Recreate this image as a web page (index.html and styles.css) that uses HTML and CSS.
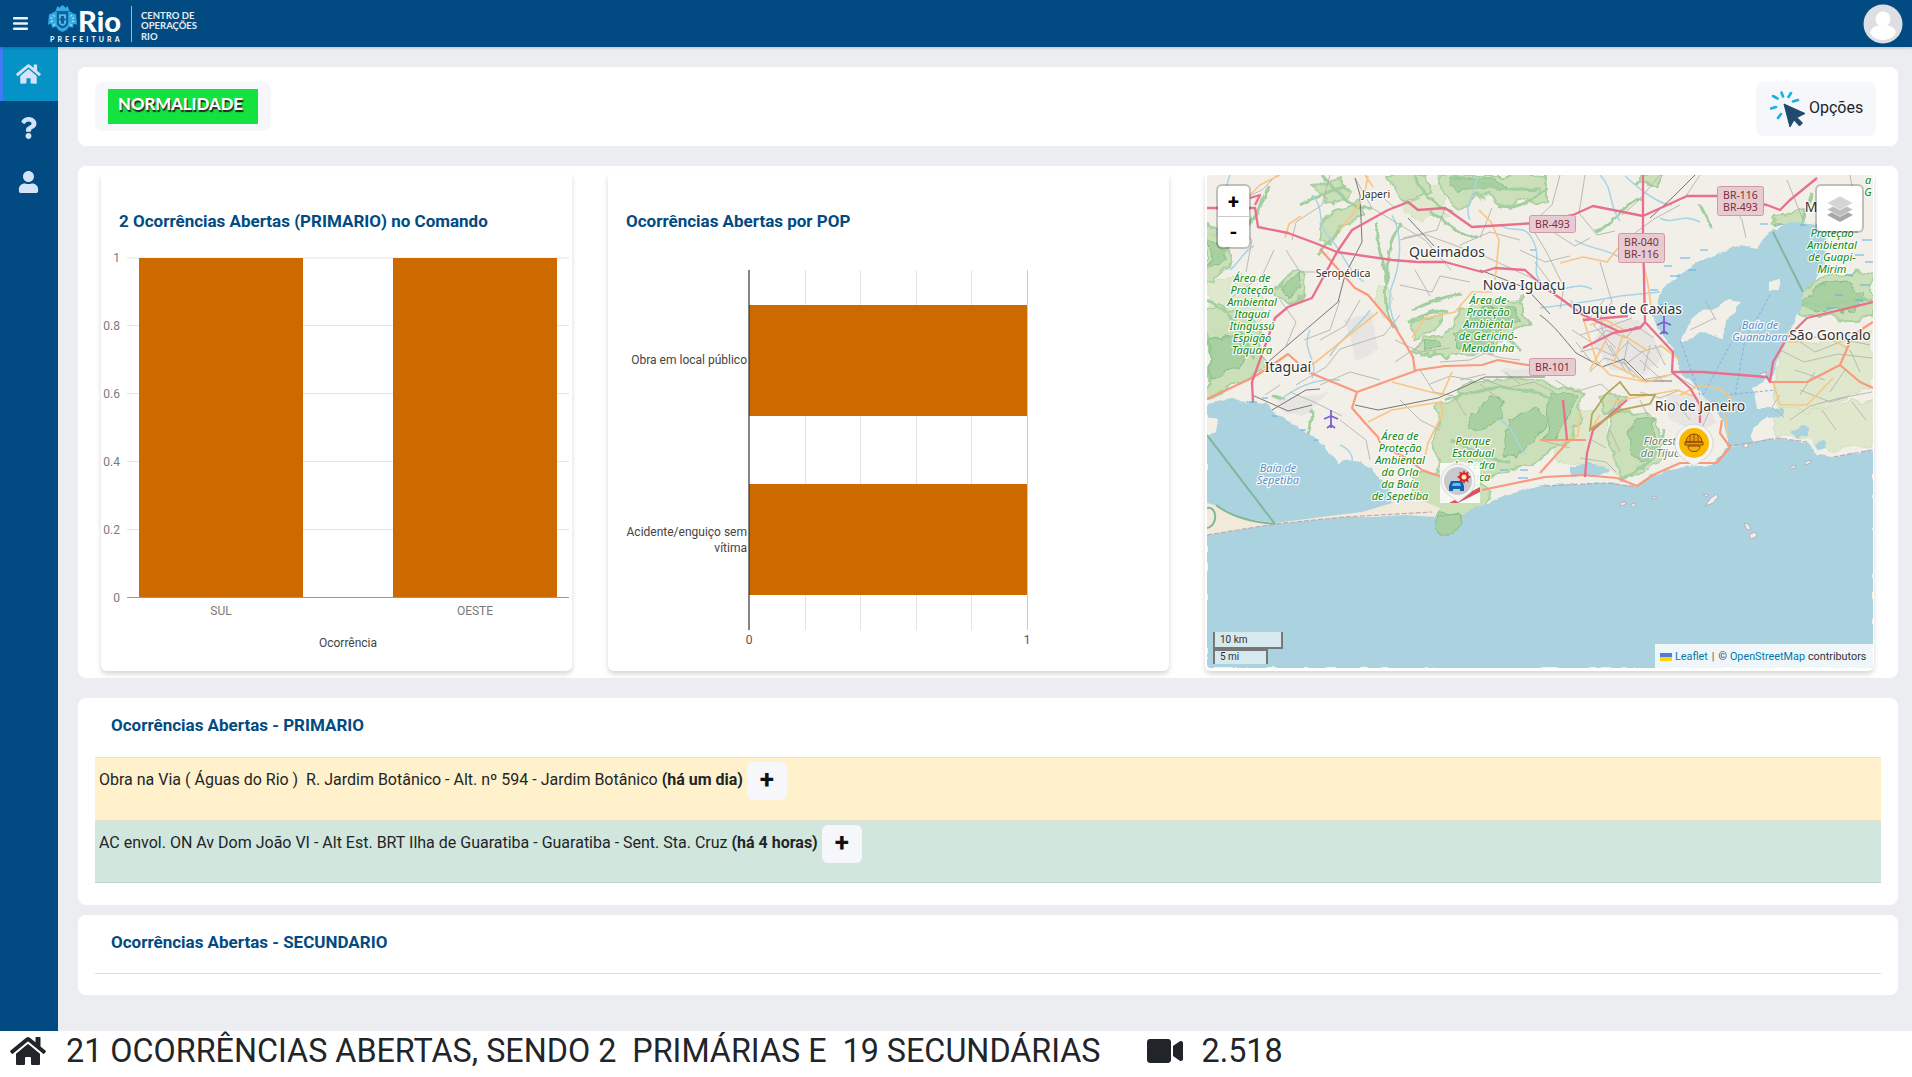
FILE: index.html
```html
<!DOCTYPE html>
<html lang="pt-BR">
<head>
    <meta charset="UTF-8">
    <title>Centro de Operações Rio</title>
    <link rel="stylesheet" href="styles.css">
</head>
<body>
<header class="topbar">
    <svg class="menu-icon" viewBox="0 0 15 13"><rect width="15" height="2.6" rx="1"/><rect y="5.2" width="15" height="2.6" rx="1"/><rect y="10.4" width="15" height="2.6" rx="1"/></svg>
    <div class="logo">
        <svg class="crest" viewBox="0 0 28 26">
            <path d="M8 4l1-3 2 1.500L14 0l3 2.500L19 1l1 3 1 2H7z" fill="#35aee6"/>
            <path d="M4 8c2-2 4-2 5-1h10c1-1 3-1 5 1l3 1 1 10-3-1-1 4-4-1-2 3-4 2-4-2-2-3-4 1-1-4-3 1 1-10z" fill="#2fa9e2"/>
            <path d="M8.500 7h11v10c0 3-3 4.500-5.500 5.500C11.500 21.500 8.500 20 8.500 17z" fill="#0e5f9b"/>
            <path d="M10.500 9h7v7.500c0 2-2 3-3.500 3.500-1.500-.5-3.500-1.500-3.500-3.500z" fill="#58b8e6"/>
            <path d="M12.500 10.500h3V13h1.500v2h-1.500v3h-3v-3H11v-2h1.500z" fill="#0e5f9b"/>
            <path d="M2 12l2.500 1M2.500 16l2.500-.5M25.500 12L23 13M25.500 16l-2.500-.5M5 20l2-2M23 20l-2-2M4.500 9.500L6.500 11M23.500 9.500L21.500 11" stroke="#a6def7" stroke-width="1.100" fill="none"/>
        </svg>
        <span class="logo-rio">Rio</span>
        <span class="logo-sub">PREFEITURA</span>
    </div>
    <div class="logo-divider"></div>
    <div class="logo-text">CENTRO DE<br>OPERAÇÕES<br>RIO</div>
    <svg class="avatar" viewBox="0 0 40 40">
        <circle cx="20" cy="20" r="19.5" fill="#dedfe3"/>
        <circle cx="20" cy="15" r="7.5" fill="#fff"/>
        <path d="M7 29c1-6 7-8 13-8s12 2 13 8c-3 5-8 7-13 7s-10-2-13-7z" fill="#fff"/>
    </svg>
</header>

<div class="layout">
    <nav class="sidebar">
        <a class="side-item active"><svg viewBox="0 0 576 512"><path d="M280.37 148.26L96 300.11V464a16 16 0 0 0 16 16l112.06-.29a16 16 0 0 0 15.92-16V368a16 16 0 0 1 16-16h64a16 16 0 0 1 16 16v95.64a16 16 0 0 0 16 16.05L464 480a16 16 0 0 0 16-16V300L295.67 148.26a12.19 12.19 0 0 0-15.3 0zM571.6 251.47L488 182.56V44.05a12 12 0 0 0-12-12h-56a12 12 0 0 0-12 12v72.61L318.47 43a48 48 0 0 0-61 0L4.34 251.47a12 12 0 0 0-1.6 16.9l25.5 31A12 12 0 0 0 45.15 301l235.22-193.74a12.19 12.19 0 0 1 15.3 0L530.9 301a12 12 0 0 0 16.9-1.6l25.5-31a12 12 0 0 0-1.7-16.93z"/></svg></a>
        <a class="side-item"><svg viewBox="0 0 384 512"><path d="M202.021 0C122.202 0 70.503 32.703 29.914 91.026c-7.363 10.58-5.093 25.086 5.178 32.874l43.138 32.709c10.373 7.865 25.132 6.026 33.253-4.148 25.049-31.381 43.63-49.449 82.757-49.449 30.764 0 68.816 19.799 68.816 49.631 0 22.552-18.617 34.134-48.993 51.164-35.423 19.86-82.299 44.576-82.299 106.405V320c0 13.255 10.745 24 24 24h72.471c13.255 0 24-10.745 24-24v-5.773c0-42.86 125.268-44.645 125.268-160.627C377.504 66.256 286.902 0 202.021 0zM192 373.459c-38.196 0-69.271 31.075-69.271 69.271 0 38.195 31.075 69.27 69.271 69.27s69.271-31.075 69.271-69.271-31.075-69.27-69.271-69.27z"/></svg></a>
        <a class="side-item"><svg viewBox="0 0 448 512"><path d="M224 256c70.7 0 128-57.3 128-128S294.7 0 224 0 96 57.3 96 128s57.3 128 128 128zm89.6 32h-16.7c-22.2 10.2-46.9 16-72.9 16s-50.6-5.8-72.9-16h-16.7C60.2 288 0 348.2 0 422.4V464c0 26.5 21.5 48 48 48h352c26.5 0 48-21.5 48-48v-41.6c0-74.2-60.2-134.4-134.4-134.4z"/></svg></a>
    </nav>

    <main class="main">
        <section class="card status-card">
            <div class="status-box"><span class="status-label">NORMALIDADE</span></div>
            <button class="options-btn">
                <svg viewBox="0 0 36 36" class="options-icon">
                    <g stroke="#14b3e0" stroke-width="2.6" stroke-linecap="round">
                        <path d="M11.500 1.500l1.500 4M21 2l-2.500 4M28 9l-5 1.500M3 5l4.500 2.500M1 17.500l5-1.500M8 27l3-4"/>
                    </g>
                    <path d="M14 13l6 23 4-7 5.500 6 3-3-5.500-5.500 8-4z" fill="#22496e" stroke="#22496e" stroke-linejoin="round"/>
                </svg>
                <span>Opções</span>
            </button>
        </section>

        <section class="card charts-card">
            <div class="chart-card">
                <h3 class="chart-title">2 Ocorrências Abertas (PRIMARIO) no Comando</h3>
                <svg class="chart" width="471" height="439" viewBox="0 0 471 439">
                    <g class="grid">
                        <line x1="26" x2="468" y1="26" y2="26"/>
                        <line x1="26" x2="468" y1="93.500" y2="93.500"/>
                        <line x1="26" x2="468" y1="161.500" y2="161.500"/>
                        <line x1="26" x2="468" y1="229.500" y2="229.500"/>
                        <line x1="26" x2="468" y1="297.500" y2="297.500"/>
                    </g>
                    <rect class="bar" x="38" y="26" width="164" height="339"/>
                    <rect class="bar" x="292" y="26" width="164" height="339"/>
                    <line class="baseline" x1="26" x2="468" y1="365.500" y2="365.500"/>
                    <g class="tick end">
                        <text x="19" y="30">1</text>
                        <text x="19" y="98">0.8</text>
                        <text x="19" y="166">0.6</text>
                        <text x="19" y="234">0.4</text>
                        <text x="19" y="302">0.2</text>
                        <text x="19" y="370">0</text>
                    </g>
                    <g class="tick middle">
                        <text x="120" y="383">SUL</text>
                        <text x="374" y="383">OESTE</text>
                    </g>
                    <text class="axis-name" x="247" y="415">Ocorrência</text>
                </svg>
            </div>

            <div class="chart-card">
                <h3 class="chart-title">Ocorrências Abertas por POP</h3>
                <svg class="chart" width="561" height="439" viewBox="0 0 561 439">
                    <g class="grid">
                        <line x1="197.500" x2="197.500" y1="38" y2="398"/>
                        <line x1="252.500" x2="252.500" y1="38" y2="398"/>
                        <line x1="308.500" x2="308.500" y1="38" y2="398"/>
                        <line x1="363.500" x2="363.500" y1="38" y2="398"/>
                    </g>
                    <line class="axis-end" x1="419.500" x2="419.500" y1="38" y2="398"/>
                    <rect class="bar" x="141" y="73" width="278" height="111"/>
                    <rect class="bar" x="141" y="252" width="278" height="111"/>
                    <line class="axis-start" x1="141" x2="141" y1="38" y2="398"/>
                    <g class="label end">
                        <text x="139" y="132">Obra em local público</text>
                        <text x="139" y="304">Acidente/enguiço sem</text>
                        <text x="139" y="320">vítima</text>
                    </g>
                    <g class="tick-dark middle">
                        <text x="141" y="412">0</text>
                        <text x="419" y="412">1</text>
                    </g>
                </svg>
            </div>

            <div class="map-card">
                <div class="map">
                    <svg class="map-art" width="666" height="493" viewBox="1207 175 666 493">
                        <defs>
                            <filter id="rough" x="-5%" y="-5%" width="110%" height="110%" color-interpolation-filters="sRGB">
                                <feTurbulence type="fractalNoise" baseFrequency=".045" numOctaves="3" seed="7" result="noise"/>
                                <feDisplacementMap in="SourceGraphic" in2="noise" scale="18" xChannelSelector="R" yChannelSelector="G"/>
                            </filter>
                            <filter id="coast" x="-2%" y="-2%" width="104%" height="104%" color-interpolation-filters="sRGB">
                                <feTurbulence type="fractalNoise" baseFrequency=".11" numOctaves="2" seed="3" result="noise"/>
                                <feDisplacementMap in="SourceGraphic" in2="noise" scale="5" xChannelSelector="R" yChannelSelector="G"/>
                            </filter>
                        </defs>
                        <rect class="land" x="1207" y="175" width="666" height="493"/>

                        <!-- matas -->
                        <g class="forest-pale" filter="url(#rough)">
                            <path d="M1780 345L1873 330 1873 392 1832 404 1790 420 1773 408Z"/>
                            <path d="M1773 412L1873 400 1873 445 1830 452 1812 438 1780 434Z"/>
                            <path d="M1370 300L1380 285 1392 296 1388 315Z"/>
                            <path d="M1207 282L1240 272 1262 300 1262 330 1207 330Z"/>
                            <path d="M1395 190L1440 184 1450 214 1420 222Z"/>
                            <path d="M1540 410L1600 406 1620 470 1560 462Z"/>
                        </g>
                        <g class="forest" filter="url(#rough)">
                            <path d="M1207 225L1222 232 1228 262 1216 280 1207 282Z"/>
                            <path d="M1207 308L1236 306 1262 328 1262 366 1240 388 1207 396Z"/>
                            <path d="M1275 290L1290 272 1306 276 1304 296 1284 304Z"/>
                            <path d="M1316 240L1330 210 1362 200 1362 216 1340 228 1330 244Z"/>
                            <path d="M1310 190L1340 178 1352 190 1330 204Z"/>
                            <path d="M1388 175L1428 175 1430 192 1402 200Z"/>
                            <path d="M1438 175L1545 175 1545 200 1510 204 1490 196 1462 204 1442 192Z"/>
                            <path d="M1415 352L1424 338 1444 336 1462 308 1490 302 1526 300 1526 326 1504 336 1492 352 1450 356 1425 356Z"/>
                            <path d="M1440 408L1470 384 1510 378 1545 384 1582 392 1580 424 1560 446 1530 466 1500 470 1480 486 1446 492 1440 470 1432 440Z"/>
                            <path d="M1610 416L1650 412 1662 430 1660 456 1644 476 1622 478 1612 450Z"/>
                            <path d="M1600 396L1624 394 1622 414 1604 416Z"/>
                            <path d="M1793 292L1830 276 1873 274 1873 316 1830 318 1800 318Z"/>
                            <path d="M1773 216L1806 212 1806 226 1776 226Z"/>
                            <path d="M1412 474L1440 470 1490 490 1488 512 1462 518 1430 512 1410 500Z"/>
                            <path d="M1640 175L1660 175 1660 182 1640 182Z"/>
                            <path d="M1408 322L1440 312 1436 330 1412 340Z"/>
                        </g>
                        <g class="forest-deep" filter="url(#rough)">
                            <path d="M1208 340L1236 332 1250 346 1240 368 1216 378 1208 380Z"/>
                            <path d="M1282 284L1298 276 1300 290 1286 298Z"/>
                            <path d="M1450 178L1490 178 1506 186 1484 192 1458 192Z"/>
                            <path d="M1476 312L1518 306 1520 322 1500 330 1490 346 1462 348 1452 338 1468 324Z"/>
                            <path d="M1424 342L1440 340 1444 350 1426 352Z"/>
                            <path d="M1470 412L1490 398 1505 402 1500 420 1484 430 1472 426Z"/>
                            <path d="M1510 420L1535 408 1546 414 1534 440 1516 456 1498 452Z"/>
                            <path d="M1548 392L1576 396 1574 418 1556 436 1544 440Z"/>
                            <path d="M1632 420L1654 418 1656 446 1642 462 1630 458Z"/>
                            <path d="M1812 288L1846 282 1862 292 1852 310 1816 312 1802 304Z"/>
                            <path d="M1438 515L1462 514 1462 526 1448 536 1436 534Z"/>
                            <path d="M1210 236L1220 240 1220 262 1212 268Z"/>
                        </g>
                        <g class="forest-edge" filter="url(#coast)">
                            <path d="M1378 222C1372 240 1386 262 1386 282 1384 300 1386 316 1394 328M1402 222C1392 240 1384 256 1388 282M1412 310C1424 302 1448 296 1462 294M1408 322C1420 318 1432 308 1448 312M1340 230C1330 240 1322 246 1318 256M1430 210C1446 224 1462 236 1478 238M1480 183C1504 192 1520 188 1540 190M1322 175C1340 196 1350 210 1372 208M1216 258C1240 240 1258 220 1268 186M1272 395L1314 412 1306 440"/>
                            <path d="M1445 400C1462 392 1478 394 1498 386 1520 392 1540 388 1550 400M1450 440C1470 446 1486 462 1510 462M1520 350C1500 330 1480 326 1460 330M1545 190C1530 200 1515 212 1498 206M1620 480C1640 470 1660 460 1664 430M1795 300C1820 312 1850 296 1872 300M1207 300C1225 310 1240 320 1254 360M1300 205C1312 198 1326 192 1346 186M1414 175C1420 190 1432 204 1452 212M1596 232C1618 222 1624 200 1644 198M1700 205L1712 228M1792 230C1800 240 1804 210 1812 195"/>
                        </g>

                        <g class="urban" filter="url(#coast)">
                            <path d="M1345 320L1372 312 1378 350 1356 362Z"/>
                            <path d="M1278 400L1330 392 1302 416 1284 412Z"/>
                            <path d="M1600 320L1640 320 1665 355 1645 375 1610 368 1595 345Z"/>
                            <path d="M1500 370L1540 366 1545 376 1510 378Z"/>
                            <path d="M1665 395L1705 392 1716 425 1692 430 1670 420Z"/>
                        </g>

                        <!-- rios -->
                        <path class="river" d="M1230 175C1222 195 1226 215 1216 235M1312 195C1326 210 1316 222 1328 236 1340 246 1346 270 1364 282M1392 215C1404 236 1400 266 1392 286 1384 306 1398 330 1398 330M1500 225C1514 235 1526 221 1534 243 1542 257 1530 273 1542 283 1560 299 1572 279 1592 289M1600 175C1614 189 1608 205 1620 221M1540 308C1570 304 1590 302 1620 296L1660 292M1370 310C1360 326 1342 336 1330 356M1280 400C1300 384 1320 378 1340 380M1500 420C1516 428 1516 446 1526 454M1340 445C1350 449 1354 457 1352 465M1660 218C1674 226 1680 212 1700 222M1475 175C1480 190 1462 204 1470 220M1310 330C1300 350 1320 362 1312 378M1625 176C1640 190 1660 205 1672 205M1230 270C1240 262 1244 250 1254 246M1575 240C1590 250 1610 248 1626 262"/>

                        <!-- mar e baías -->
                        <g class="water" filter="url(#coast)">
                            <path d="M1207 403L1212 402 1232 398 1245 402 1268 405 1272 410 1298 427 1312 436 1325 447 1338 463 1346 461 1355 460 1372 468 1378 477 1388 486 1392 495 1392 503 1405 506 1420 508 1432 512 1438 517 1434 530 1440 535 1448 535 1456 528 1462 517 1470 510 1488 503 1505 495 1545 485 1575 484 1607 483 1622 484 1637 487 1653 475 1683 467 1713 465 1727 448 1740 445 1757 442 1777 438 1807 442 1812 446 1817 455 1833 457 1873 450 1873 668 1207 668Z"/>
                            <path d="M1770 232L1782 226 1793 222 1817 225 1826 240 1824 270 1803 292 1803 308 1797 315 1787 335 1780 355 1773 375 1753 388 1757 408 1783 408 1783 417 1765 418 1755 426 1750 437 1755 446 1727 446 1727 436 1723 420 1703 395 1693 382 1680 372 1673 348 1657 328 1653 315 1663 288 1697 262 1740 245 1757 248Z"/>
                            <path d="M1570 468L1590 462 1612 470 1600 476 1570 476Z"/>
                            <path d="M1790 432L1802 426 1810 428 1808 436 1796 438Z"/>
                            <path d="M1815 445L1824 440 1826 448 1818 450Z"/>
                        </g>
                        <g class="land" filter="url(#coast)">
                            <path d="M1680 342L1688 324 1697 312 1717 308 1727 300 1740 302 1734 312 1726 322 1723 338 1713 336 1704 332 1696 334 1688 342Z"/>
                            <path d="M1770 282L1780 278 1778 290 1770 290Z"/>
                            <path d="M1207 417L1218 420 1216 432 1207 436Z"/>
                        </g>
                        <path class="sand" d="M1207 535L1275 524 1345 517 1375 517 1405 515 1435 517 1440 508 1420 500 1392 503 1362 512 1345 514 1275 523 1240 518 1225 510 1215 505 1207 503Z"/>
                        <path class="forest-deep" filter="url(#coast)" d="M1438 516L1460 514 1462 522 1450 535 1440 535 1434 528Z"/>
                        <path class="ring" d="M1207 508C1218 506 1218 526 1207 528"/>
                        <g class="islet">
                            <path d="M1620 503L1625 502 1626 504 1621 506ZM1630 505L1635 503 1636 505 1632 507ZM1652 497L1656 496 1656 498 1652 499ZM1703 494L1709 495 1706 497ZM1711 498L1717 494 1718 497 1713 503 1705 506ZM1749 535L1755 532 1757 536 1751 539ZM1744 523L1748 524 1751 529 1747 530ZM1790 467L1796 465 1795 468 1790 469ZM1805 462L1811 460 1810 463 1805 465ZM1744 444L1748 443 1748 447 1744 448ZM1760 374L1766 372 1766 377 1761 378Z"/>
                        </g>
                        <path class="marsh" d="M1670 276h10M1688 270h8M1664 266h8M1680 258h10M1700 250h8M1650 290h8M1660 305h6M1760 224h8M1775 224h7M1800 225h6M1850 232h8M1862 240h10M1855 255h9M1865 262h8M1845 275h8M1860 285h10M1835 295h8M1855 300h8M1826 308h8M1246 402h8M1262 398h6M1272 416h6M1300 430h6M1314 440h5M1400 500h8M1420 498h8M1440 500h6M1450 465h8M1470 465h6M1500 470h8M1520 470h8M1518 478h10M1530 250h6M1250 402h7"/>
                        <path class="ferry" d="M1703 395L1730 345 1745 320M1735 395L1745 340 1770 295M1700 395L1680 340M1725 395L1775 390"/>

                        <!-- limites -->
                        <path class="boundary" d="M1207 435L1275 524M1773 232L1803 292M1216 505C1230 516 1250 522 1275 524"/>
                        <path class="coast-line" d="M1207 535L1275 524 1345 517 1432 512M1438 533L1448 535M1545 486L1607 483 1637 487M1713 465L1727 450M1727 446L1757 442 1777 438 1807 442M1833 457L1873 450"/>

                        <!-- vias -->
                        <g class="road-thin">
                            <path d="M1330 175L1322 205 1296 222 1292 240M1355 178L1372 208 1425 240 1451 270M1400 240L1424 234 1484 256 1558 290M1445 208L1437 230 1403 238M1530 225L1546 251 1564 287 1560 309M1585 175L1579 213 1597 235 1615 231M1660 175L1638 201 1622 215M1680 205L1654 219 1624 241M1600 262L1612 302 1594 326 1616 348M1700 175L1684 199M1730 200L1742 220 1746 238M1787 180L1803 220M1850 175L1856 209M1560 175L1552 205 1530 225M1492 208L1480 238M1380 195L1395 208 1420 198M1240 200L1262 190 1282 170M1395 340L1420 352 1450 348M1280 300L1296 322 1286 346"/>
                            <path d="M1290 392L1314 402 1342 416M1400 315L1384 335 1340 349 1326 367 1296 385M1420 370L1434 392 1454 396 1466 416M1480 378L1508 388 1534 382 1554 392M1555 380L1575 392 1601 384 1619 400M1620 360L1642 380 1674 374 1696 388M1780 350L1804 362 1838 354 1872 358M1790 420L1810 406 1840 398 1872 392M1800 390L1830 402 1850 396M1610 430L1620 452M1540 440L1570 448M1580 458L1606 462 1616 472M1640 458L1660 448 1680 456M1340 420L1366 440 1370 460M1400 400L1420 420 1440 430"/>
                            <path d="M1572 330L1594 344 1606 330 1626 338 1636 326 1654 338M1580 352L1596 348 1614 356 1628 342 1640 352 1662 346M1590 372L1604 358 1626 364 1642 352 1658 368M1600 320L1606 342 1614 356M1628 340L1624 362 1634 378M1650 345L1644 371M1680 390L1660 398 1640 392M1700 415L1712 401 1726 405M1480 352L1502 358 1520 360M1460 380L1486 374M1780 395L1772 407 1784 417M1620 395L1610 413M1570 300L1590 318 1604 300M1580 335L1610 326 1632 318M1590 360L1576 342M1610 345L1626 372M1640 360L1664 382M1665 365L1655 345M1815 372L1800 395M1845 370L1830 392M1480 384L1500 400M1505 372L1520 384M1430 384L1450 376 1472 380"/>
                            <path d="M1460 245L1490 232 1520 240M1520 250L1545 262 1570 256M1550 230L1575 246 1590 238M1535 262L1550 282M1400 285L1432 292 1440 276 1470 282M1415 270L1430 296M1360 300L1345 326 1320 340M1286 250L1300 272 1318 272M1225 215L1252 240 1246 272M1228 300L1262 276 1274 250M1304 340L1330 330 1340 300M1395 362L1420 345M1440 362L1470 360 1496 348M1320 385L1350 372 1380 380M1265 395L1280 385M1705 300L1716 320M1690 330L1715 318M1790 335L1815 352 1845 340 1870 345M1795 370L1825 380M1850 350L1860 372M1822 410L1836 430M1852 402L1866 420M1690 420L1676 402M1710 410L1700 432M1640 400L1648 416M1592 440L1606 448"/>
                        </g>
                        <g class="rail">
                            <path d="M1268 362L1338 302 1345 275 1362 242 1360 195 1355 178M1408 218L1434 246M1355 405L1378 410 1438 398 1468 385 1485 377 1545 377M1540 315C1554 325 1564 339 1576 353L1602 367 1624 359 1646 381 1672 381M1480 270L1526 288 1550 314M1695 175L1672 198 1650 218"/>
                            <path d="M1252 395L1288 411 1312 405M1272 410L1306 390 1320 389"/>
                        </g>
                        <g class="road-yellow">
                            <path d="M1412 338L1425 318 1455 312 1472 292 1492 292M1392 382L1442 395 1452 372M1312 365L1378 312M1368 422L1392 410 1440 402 1443 413 1428 443 1424 461M1560 263L1583 257 1607 262 1618 248M1642 258L1648 284 1652 314M1583 318L1597 362 1610 375 1647 382 1670 375M1650 352L1623 335 1613 365 1647 382M1606 340L1590 370M1787 342L1797 342 1823 335 1847 348M1773 382L1780 405 1807 405 1833 378M1580 410L1578 436 1564 440M1607 402L1621 400 1655 394 1677 390 1693 396M1720 405L1726 419 1728 435M1600 415L1590 431M1680 395L1700 385 1720 389 1732 399"/>
                            <path d="M1240 205L1260 185 1280 175M1285 238L1289 224 1301 216M1340 230L1356 210 1364 196 1368 176M1365 175L1373 187M1495 280L1499 240 1491 222 1479 210M1624 330L1606 320 1590 325M1660 345L1680 360"/>
                        </g>
                        <g class="road-salmon">
                            <path d="M1207 399L1252 378 1268 368 1288 354 1308 372 1357 392 1418 370 1445 366 1482 365 1498 360 1545 368M1320 249L1355 288 1368 295 1395 327 1413 357 1415 372M1357 392L1352 408 1365 423 1378 437 1382 447 1405 457 1422 470 1442 477M1482 490L1545 477 1583 475 1617 478 1637 486 1653 475 1680 463 1717 463 1730 447 1720 433 1722 420"/>
                            <path d="M1567 443L1540 473M1540 440H1586M1770 382H1807L1840 365 1860 382 1873 388M1873 322L1853 335 1840 365"/>
                        </g>
                        <g class="road-pink">
                            <path d="M1207 208L1255 208 1258 227 1288 233 1315 243 1337 252 1392 260 1418 262 1445 262 1482 272 1495 268 1525 270 1545 288 1560 298 1583 315 1620 332 1640 327"/>
                            <path d="M1252 382L1275 318 1288 307 1312 298 1337 252 1352 230 1388 210 1408 202 1418 210 1445 208 1472 227 1505 225 1535 223 1573 215 1593 206 1643 216 1687 196 1717 196 1767 205 1780 210 1790 200 1817 178"/>
                            <path d="M1643 175L1643 233 1645 322 1673 352 1672 372 1690 388 1700 405 1700 423M1583 348L1613 333 1640 328 1645 322M1628 316L1583 320"/>
                            <path d="M1673 372L1703 372 1767 377 1770 382 1773 362 1787 338 1807 318 1873 302"/>
                            <path d="M1563 400L1567 440M1627 400L1593 430 1587 453 1585 477M1252 382L1253 402M1255 205L1260 195 1250 198"/>
                        </g>
                        <path class="road-olive" d="M1590 430L1592 414 1606 394 1620 382 1630 395 1655 395 1650 404 1620 410 1598 424Z"/>

                        <!-- aeroportos -->
                        <g class="plane">
                            <path d="M1331 410V428M1324 419L1331 416 1338 419M1327 428L1331 425 1335 428"/>
                            <path d="M1664 316V334M1657 325L1664 322 1671 325M1660 334L1664 331 1668 334"/>
                        </g>

                        <!-- rótulos -->
                        <g class="place">
                            <text x="1447" y="257">Queimados</text>
                            <text x="1524" y="290">Nova Iguaçu</text>
                            <text x="1627" y="314">Duque de Caxias</text>
                            <text x="1830" y="340">São Gonçalo</text>
                            <text x="1700" y="411">Rio de Janeiro</text>
                            <text x="1288" y="372">Itaguaí</text>
                            <text x="1811" y="212">M</text>
                        </g>
                        <g class="place small">
                            <text x="1376" y="198">Japeri</text>
                            <text x="1343" y="277">Seropédica</text>
                        </g>
                        <g class="reserve">
                            <text x="1252" y="282">Área de</text>
                            <text x="1252" y="294">Proteção</text>
                            <text x="1252" y="306">Ambiental</text>
                            <text x="1252" y="318">Itaguaí</text>
                            <text x="1252" y="330">Itingussú</text>
                            <text x="1252" y="342">Espigão</text>
                            <text x="1252" y="354">Taquara</text>
                            <text x="1488" y="304">Área de</text>
                            <text x="1488" y="316">Proteção</text>
                            <text x="1488" y="328">Ambiental</text>
                            <text x="1488" y="340">de Gericinó-</text>
                            <text x="1488" y="352">Mendanha</text>
                            <text x="1400" y="440">Área de</text>
                            <text x="1400" y="452">Proteção</text>
                            <text x="1400" y="464">Ambiental</text>
                            <text x="1400" y="476">da Orla</text>
                            <text x="1400" y="488">da Baía</text>
                            <text x="1400" y="500">de Sepetiba</text>
                            <text x="1473" y="445">Parque</text>
                            <text x="1473" y="457">Estadual</text>
                            <text x="1473" y="469">da Pedra</text>
                            <text x="1473" y="481">Branca</text>
                            <text x="1832" y="237">Proteção</text>
                            <text x="1832" y="249">Ambiental</text>
                            <text x="1832" y="261">de Guapi-</text>
                            <text x="1832" y="273">Mirim</text>
                            <text x="1868" y="184">a</text>
                            <text x="1868" y="196">G</text>
                        </g>
                        <g class="tijuca">
                            <text x="1663" y="445">Floresta</text>
                            <text x="1663" y="457">da Tijuca</text>
                        </g>
                        <g class="bay">
                            <text x="1278" y="472">Baía de</text>
                            <text x="1278" y="484">Sepetiba</text>
                            <text x="1760" y="329">Baía de</text>
                            <text x="1760" y="341">Guanabara</text>
                        </g>

                        <!-- escudos de rodovia -->
                        <g class="shield">
                            <rect x="1529.500" y="215.500" width="46" height="17" rx="2"/>
                            <text x="1552.500" y="228">BR-493</text>
                            <rect x="1529.500" y="358.500" width="46" height="17" rx="2"/>
                            <text x="1552.500" y="371">BR-101</text>
                            <rect x="1618.500" y="233.500" width="46" height="29" rx="2"/>
                            <text x="1641.500" y="246">BR-040</text>
                            <text x="1641.500" y="258">BR-116</text>
                            <rect x="1717.500" y="186.500" width="46" height="29" rx="2"/>
                            <text x="1740.500" y="199">BR-116</text>
                            <text x="1740.500" y="211">BR-493</text>
                        </g>

                        <!-- marcadores -->
                        <rect class="marker-tile" x="1440" y="463" width="40" height="40"/>
                        <path d="M1449 503L1480 487V492L1458 503Z" fill="#d9545f"/>
                        <path class="pin-ring" d="M1458 502L1445 492A17 17 0 1 1 1471 492Z"/>
                        <circle cx="1458" cy="481" r="14" fill="#c7c9ce"/>
                        <path d="M1451 481H1462L1464 486V491H1460V489H1453V491H1449V486Z" fill="#0d62ad"/>
                        <path d="M1453 483H1460L1461 486H1452Z" fill="#5cc0ee"/>
                        <path d="M1464 470L1465.500 473 1468.500 471.500 1468 475 1471 477 1468 479 1468.500 482.500 1465.500 481 1464 484 1462.500 481 1459.500 482.500 1460 479 1457 477 1460 475 1459.500 471.500 1462.500 473Z" fill="#d92727"/>
                        <circle cx="1464" cy="477" r="2.500" fill="#ffe6b8"/>
                        <path class="pin-ring" d="M1694 466L1680 456A19 19 0 1 1 1708 456Z"/>
                        <circle cx="1694" cy="443" r="15" fill="#fbb900"/>
                        <path d="M1686 442A8 8 0 0 1 1702 442ZM1685 442H1703V445H1685Z" fill="#ee9a05" stroke="#7a3f00" stroke-width=".9"/>
                        <path d="M1694 434V442M1690 435V442M1698 435V442" stroke="#7a3f00" stroke-width=".7"/>
                        <path d="M1688 446H1700C1700 450 1697 451.500 1694 451.500S1688 450 1688 446Z" fill="#f5ae15" stroke="#7a3f00" stroke-width=".9"/>
                    </svg>

                    <div class="zoom-ctl">
                        <a>+</a>
                        <a>-</a>
                    </div>
                    <div class="layers-ctl">
                        <svg viewBox="0 0 26 26" width="26" height="26">
                            <path d="M13 12l13 7-13 7-13-7z" fill="#a7a7a7"/>
                            <path d="M13 6.500l13 7-13 7-13-7z" fill="#bdbdbd" stroke="#fff" stroke-width=".6"/>
                            <path d="M13 0l13 7-13 7-13-7z" fill="#d4d4d4" stroke="#fff" stroke-width=".6"/>
                        </svg>
                    </div>
                    <div class="scale">
                        <div class="scale-km">10 km</div>
                        <div class="scale-mi">5 mi</div>
                    </div>
                    <div class="attribution">
                        <svg class="flag" viewBox="0 0 12 8" width="12" height="8"><rect width="12" height="4" fill="#4C7BE1"/><rect y="4" width="12" height="4" fill="#FFD500"/></svg>
                        <a>Leaflet</a>
                        <span class="attr-sep">|</span>
                        © <a>OpenStreetMap</a> contributors
                    </div>
                </div>
            </div>
        </section>

        <section class="card list-card">
            <h3 class="list-title">Ocorrências Abertas - PRIMARIO</h3>
            <div class="list-row row-yellow">
                <span>Obra na Via ( Águas do Rio )&nbsp; R. Jardim Botânico - Alt. nº 594 - Jardim Botânico <b>(há um dia)</b></span>
                <button class="plus-btn">+</button>
            </div>
            <div class="list-row row-green">
                <span>AC envol. ON Av Dom João VI - Alt Est. BRT Ilha de Guaratiba - Guaratiba - Sent. Sta. Cruz <b>(há 4 horas)</b></span>
                <button class="plus-btn">+</button>
            </div>
        </section>

        <section class="card list-card secondary">
            <h3 class="list-title">Ocorrências Abertas - SECUNDARIO</h3>
            <div class="list-empty"></div>
        </section>
    </main>
</div>

<footer class="bottombar">
    <svg class="bottom-home" viewBox="0 0 576 512"><path d="M280.37 148.26L96 300.11V464a16 16 0 0 0 16 16l112.06-.29a16 16 0 0 0 15.92-16V368a16 16 0 0 1 16-16h64a16 16 0 0 1 16 16v95.64a16 16 0 0 0 16 16.05L464 480a16 16 0 0 0 16-16V300L295.67 148.26a12.19 12.19 0 0 0-15.3 0zM571.6 251.47L488 182.56V44.05a12 12 0 0 0-12-12h-56a12 12 0 0 0-12 12v72.61L318.47 43a48 48 0 0 0-61 0L4.34 251.47a12 12 0 0 0-1.6 16.9l25.5 31A12 12 0 0 0 45.15 301l235.22-193.74a12.19 12.19 0 0 1 15.3 0L530.9 301a12 12 0 0 0 16.9-1.6l25.5-31a12 12 0 0 0-1.7-16.93z"/></svg>
    <span class="bottom-text">21 OCORRÊNCIAS ABERTAS, SENDO 2&nbsp; PRIMÁRIAS E&nbsp; 19 SECUNDÁRIAS</span>
    <svg class="bottom-cam" viewBox="0 0 576 512"><path d="M336.2 64H47.8C21.4 64 0 85.4 0 111.8v288.4C0 426.6 21.4 448 47.8 448h288.4c26.4 0 47.800-21.400 47.800-47.800V111.800c0-26.400-21.400-47.800-47.800-47.800zm189.400 37.700L416 177.300v157.400l109.600 75.500c21.200 14.600 50.400-.3 50.400-25.800V127.500c0-25.400-29.100-40.400-50.400-25.800z"/></svg>
    <span class="bottom-text">2.518</span>
</footer>
</body>
</html>
```

FILE: styles.css
```css
* {
    box-sizing: border-box;
}
html, body {
    margin: 0;
    height: 100%;
    overflow: hidden;
}
body {
    font-family: Roboto, "Liberation Sans", sans-serif;
    background-color: #ebedf0;
    color: #212529;
    display: flex;
    flex-direction: column;
}

/* barra superior */
.topbar {
    height: 47px;
    flex: none;
    background-color: #024b82;
    display: flex;
    align-items: center;
    position: relative;
    box-shadow: 0 1px 3px rgba(0, 0, 0, .2);
    z-index: 2;
}
.menu-icon {
    width: 15px;
    height: 13px;
    margin-left: 13px;
    fill: #eef2f8;
}
.logo {
    width: 75px;
    height: 40px;
    margin-left: 20px;
    position: relative;
}
.crest {
    position: absolute;
    left: 0;
    top: 1px;
    width: 29px;
    height: 27px;
}
.logo-rio {
    position: absolute;
    left: 30px;
    top: 3px;
    font-family: Lato, sans-serif;
    font-weight: 900;
    font-size: 29px;
    line-height: 27px;
    color: #fff;
}
.logo-sub {
    position: absolute;
    left: 2px;
    top: 31px;
    font-family: Lato, sans-serif;
    font-weight: 700;
    font-size: 7px;
    line-height: 8px;
    letter-spacing: 3.1px;
    color: #fff;
    white-space: nowrap;
}
.logo-divider {
    width: 1px;
    height: 36px;
    margin-left: 8px;
    background-color: rgba(255, 255, 255, .6);
}
.logo-text {
    margin-left: 9px;
    font-family: Lato, sans-serif;
    font-weight: 700;
    font-size: 9.500px;
    line-height: 10.300px;
    color: #e6edf5;
    padding-top: 6px;
}
.avatar {
    width: 40px;
    height: 40px;
    margin-left: auto;
    margin-right: 9px;
}

.layout {
    flex: 1;
    display: flex;
    min-height: 0;
}

/* menu lateral */
.sidebar {
    width: 58px;
    flex: none;
    background-color: #024b82;
}
.side-item {
    height: 54px;
    display: flex;
    align-items: center;
    justify-content: center;
    padding-right: 1px;
}
.side-item svg {
    height: 22px;
    width: 25px;
    fill: #d5e3f8;
}
.side-item.active {
    background-color: #0592c6;
    border-left: 3px solid #3f7bf5;
    padding-right: 4px;
}

.main {
    flex: 1;
    min-width: 0;
    padding: 20px 14px 0 20px;
}
.card {
    background-color: #fff;
    border-radius: 8px;
}

/* situação */
.status-card {
    height: 79px;
    padding: 15px 22px 10px 17px;
    display: flex;
    justify-content: space-between;
    align-items: flex-start;
}
.status-box {
    width: 176px;
    height: 49px;
    padding: 7px 13px;
    background-color: #f5f7fa;
    border-radius: 8px;
}
.status-label {
    display: block;
    height: 35px;
    line-height: 31px;
    padding-left: 10px;
    background-color: #13e23f;
    color: #fff;
    font-family: Lato, sans-serif;
    font-weight: 900;
    font-size: 16.700px;
    text-shadow: 1px 1.500px 1px #222;
}
.options-btn {
    width: 120px;
    height: 54px;
    border: 0;
    border-radius: 8px;
    background-color: #f5f7fa;
    display: flex;
    align-items: center;
    padding: 0 0 0 14px;
    font-family: inherit;
    font-size: 16px;
    color: #212529;
}
.options-btn span {
    margin-bottom: 4px;
}
.options-icon {
    width: 36px;
    height: 36px;
    margin-right: 3px;
}

/* gráficos */
.charts-card {
    margin-top: 20px;
    height: 512px;
    padding: 6px 24px 7px 23px;
    display: grid;
    grid-template-columns: 471px 561px 1fr;
    column-gap: 36px;
}
.chart-card, .map-card {
    background-color: #fff;
    border-radius: 6px;
    box-shadow: 0 3px 5px rgba(0, 0, 0, .16);
}
.chart-title {
    margin: 0;
    height: 60px;
    padding: 38px 0 0 18px;
    font-size: 17px;
    line-height: 23px;
    font-weight: 700;
    color: #024b82;
}
.chart {
    display: block;
}
.grid line {
    stroke: #e4e4e4;
    stroke-width: 1;
}
.bar {
    fill: #cc6a00;
}
.baseline {
    stroke: #999;
}
.axis-start {
    stroke: #333;
    stroke-width: 1.200;
}
.axis-end {
    stroke: #ccc;
}
.tick, .tick-dark, .label, .axis-name {
    font-family: Roboto, sans-serif;
    font-size: 12px;
}
.tick {
    fill: #7a7a7a;
}
.tick-dark {
    fill: #555;
}
.label, .axis-name {
    fill: #444;
}
.end {
    text-anchor: end;
}
.middle, .axis-name {
    text-anchor: middle;
}

/* mapa */
.map-card {
    padding: 3px 1px 3px 2px;
}
.map {
    position: relative;
    width: 666px;
    height: 493px;
    overflow: hidden;
    border-radius: 4px;
}
.map-art {
    display: block;
}
.land {
    fill: #f2efe9;
}
.water {
    fill: #aad3df;
}
.sand {
    fill: #f1eadb;
}
.urban {
    fill: #e7e5e1;
}
.forest {
    fill: #cbe0b8;
    stroke: #a9d0a0;
    stroke-width: 2;
    stroke-linejoin: round;
}
.forest-pale {
    fill: #dfe8cd;
    stroke: #cfe0bd;
    stroke-linejoin: round;
}
.forest-deep {
    fill: #a8d0a0;
    stroke: #86bd8b;
    stroke-linejoin: round;
}
.forest-edge {
    fill: none;
    stroke: #a3cfa0;
    stroke-width: 3;
}
.river {
    fill: none;
    stroke: #a6d4e4;
    stroke-width: 1.500;
}
.marsh {
    fill: none;
    stroke: #5cb0e6;
    stroke-width: 1;
}
.ferry {
    fill: none;
    stroke: #8fa8e6;
    stroke-width: 1;
    stroke-dasharray: 3 2;
}
.boundary, .ring {
    fill: none;
    stroke: #7fb79a;
    stroke-width: 2;
}
.coast-line {
    fill: none;
    stroke: #bfa8b4;
    stroke-width: 1.200;
    stroke-dasharray: 5 2;
}
.islet {
    fill: #f2efe9;
    stroke: #b9a3b2;
    stroke-width: .8;
}
.road-thin {
    fill: none;
    stroke: #b5b3ae;
    stroke-width: .9;
}
.rail {
    fill: none;
    stroke: #777;
    stroke-width: 1;
}
.road-yellow {
    fill: none;
    stroke: #f8c684;
    stroke-width: 1.700;
    stroke-linejoin: round;
}
.road-salmon {
    fill: none;
    stroke: #fa9a7c;
    stroke-width: 2.200;
    stroke-linejoin: round;
}
.road-pink {
    fill: none;
    stroke: #e8708c;
    stroke-width: 2.300;
    stroke-linejoin: round;
}
.road-olive {
    fill: none;
    stroke: #b5a958;
    stroke-width: 1.800;
}
.plane {
    fill: none;
    stroke: #7d5fd0;
    stroke-width: 1.800;
}
.map-art text {
    font-family: "Noto Sans", "Open Sans", sans-serif;
    text-anchor: middle;
    paint-order: stroke;
    stroke: rgba(255, 255, 255, .85);
    stroke-width: 2.500px;
    stroke-linejoin: round;
}
.place {
    font-size: 14px;
    fill: #333;
}
.place.small {
    font-size: 10.500px;
}
.reserve {
    font-size: 11px;
    font-style: italic;
    fill: #0e8a12;
}
.tijuca {
    font-size: 11px;
    font-style: italic;
    fill: #6a7f6a;
}
.bay {
    font-size: 11px;
    font-style: italic;
    fill: #5f8fc4;
}
.shield rect {
    fill: #e7cbd1;
    stroke: #cf9aa6;
}
.map-art .shield text {
    font-size: 10.500px;
    fill: #7a2f3d;
    stroke: none;
}
.marker-tile {
    fill: rgba(255, 255, 255, .82);
}
.pin-ring {
    fill: #f4f4f5;
    stroke: #d7d8da;
}
.zoom-ctl {
    position: absolute;
    left: 11px;
    top: 11px;
    width: 31px;
    background-color: #fff;
    border-radius: 4px;
    box-shadow: 0 0 0 2px rgba(0, 0, 0, .2);
}
.zoom-ctl a {
    display: block;
    height: 30px;
    line-height: 33px;
    text-align: center;
    font-size: 20px;
    font-weight: 700;
    color: #000;
}
.zoom-ctl a + a {
    border-top: 1px solid #ccc;
    height: 31px;
    line-height: 30px;
}
.layers-ctl {
    position: absolute;
    right: 11px;
    top: 11px;
    width: 45px;
    height: 45px;
    background-color: #fff;
    border-radius: 4px;
    box-shadow: 0 0 0 2px rgba(0, 0, 0, .2);
    display: flex;
    align-items: center;
    justify-content: center;
}
.scale {
    position: absolute;
    left: 6px;
    bottom: 4px;
    font-size: 10px;
    color: #333;
}
.scale-km, .scale-mi {
    height: 17px;
    line-height: 15px;
    padding-left: 5px;
    border: 2px solid #777;
    background-color: rgba(255, 255, 255, .5);
}
.scale-km {
    width: 70px;
    border-top: 0;
}
.scale-mi {
    width: 55px;
    height: 15px;
    line-height: 12px;
    border-top: 2px solid #777;
    border-bottom: 0;
    margin-top: 0;
}
.attribution {
    position: absolute;
    right: 0;
    bottom: 0;
    height: 24px;
    width: 218px;
    padding: 1px 0 0 5px;
    display: flex;
    align-items: center;
    gap: 3px;
    white-space: nowrap;
    background-color: rgba(255, 255, 255, .8);
    font-size: 10.800px;
    color: #333;
}
.attribution a {
    color: #0078a8;
}
.attr-sep {
    color: #555;
    margin: 0 1px;
}

/* listas */
.list-card {
    margin-top: 20px;
    height: 207px;
    padding: 0 17px 0 17px;
}
.list-card.secondary {
    margin-top: 10px;
    height: 80px;
}
.list-title {
    margin: 0;
    padding: 16px 0 0 16px;
    height: 59px;
    font-size: 17px;
    line-height: 22px;
    font-weight: 700;
    color: #024b82;
}
.secondary .list-title {
    padding-top: 16px;
    height: 58px;
}
.list-row {
    height: 63px;
    padding: 4px 0 0 4px;
    display: flex;
    align-items: flex-start;
    font-size: 16px;
    line-height: 34px;
    border-top: 1px solid #e7e2cf;
    color: #212529;
}
.list-row span {
    margin-top: 1px;
}
.row-yellow {
    background-color: #fff1cc;
}
.row-green {
    background-color: #d1e6dd;
    border-top-color: #e3e3cf;
    border-bottom: 1px solid #bfd5cb;
}
.plus-btn {
    width: 40px;
    height: 38px;
    margin-left: 4px;
    border: 0;
    border-radius: 6px;
    background-color: #f5f7fa;
    font-family: inherit;
    font-size: 26px;
    line-height: 30px;
    font-weight: 700;
    color: #111;
    padding: 0 0 4px;
}
.list-empty {
    border-top: 1px solid #ddd;
}

/* rodapé */
.bottombar {
    height: 46px;
    flex: none;
    background-color: #fff;
    display: flex;
    align-items: center;
    padding: 0 0 7px 10px;
    font-size: 32.300px;
    color: #212529;
}
.bottom-home {
    width: 36px;
    height: 32px;
    fill: #212529;
    margin-right: 20px;
}
.bottom-cam {
    width: 36px;
    height: 32px;
    fill: #212529;
    margin: 0 19px 0 46px;
}
.bottom-text {
    white-space: nowrap;
}
```
